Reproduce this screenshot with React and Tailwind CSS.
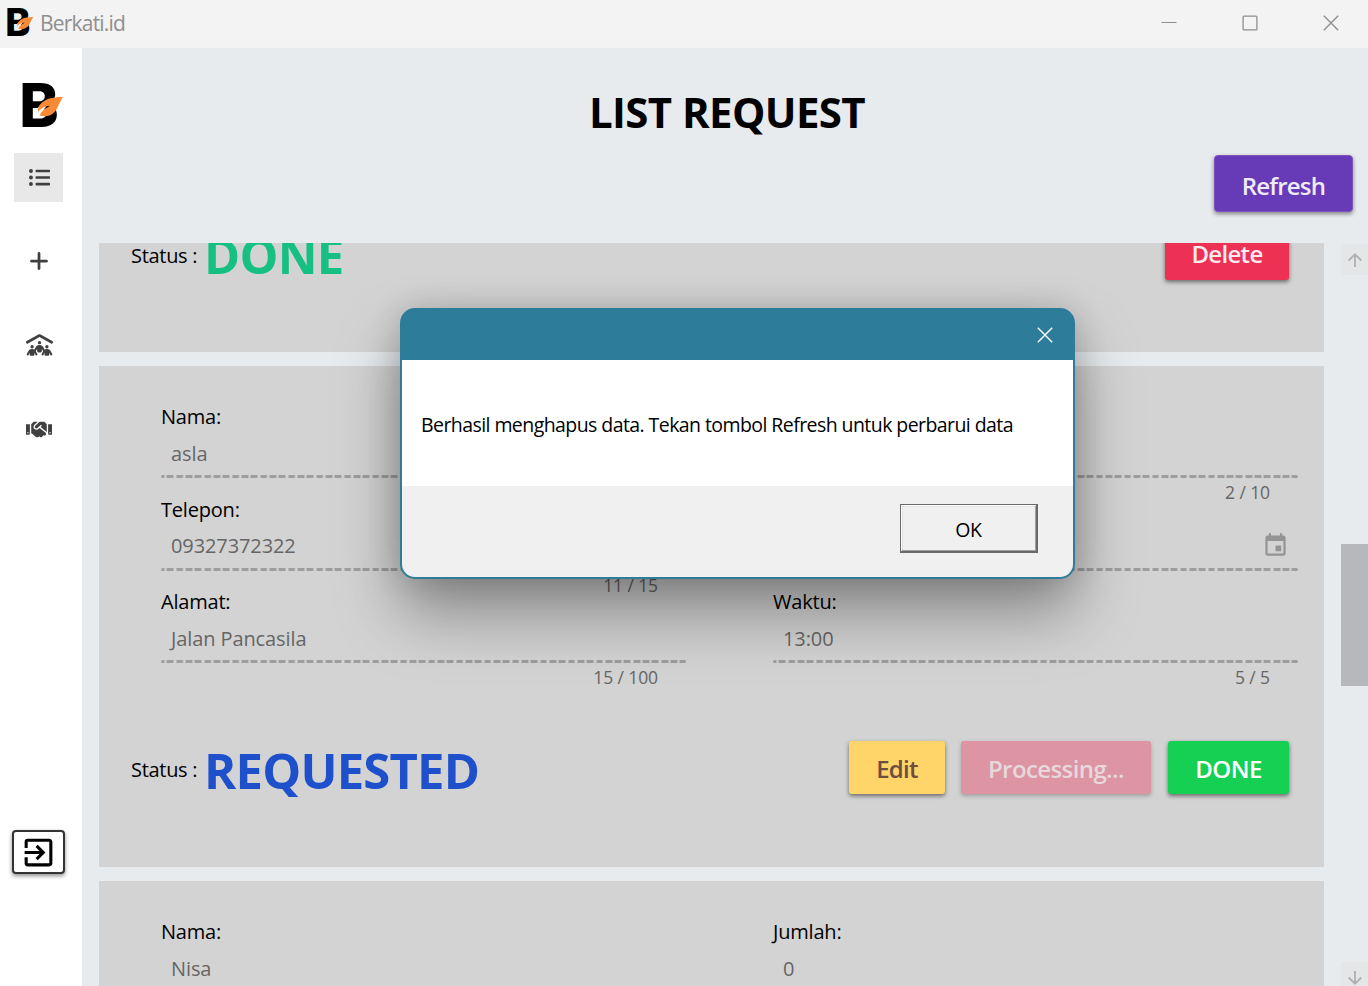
import React from "react";
import { FaListUl, FaHandshake } from "react-icons/fa";
import { FaPeopleRoof, FaPlus } from "react-icons/fa6";
import { MdExitToApp, MdEvent } from "react-icons/md";

function Logo({ className }) {
  return (
    <svg viewBox="0 0 42 44" className={className} overflow="visible" aria-label="Berkati">
      <text
        x="-2.800"
        y="44"
        fontFamily="Inter, sans-serif"
        fontWeight="800"
        fontSize="60.5"
        textLength="39.500"
        lengthAdjust="spacingAndGlyphs"
      >
        B
      </text>
      <path d="M15.500 25 L21 19.500 L24 24 L17 31.500 Z" fill="#fff" />
      <path
        d="M41 14 C32 14 24 15.500 19.500 20 C16.300 23 15.300 26.500 16.200 29.200 C17.500 26.500 21 23.500 28 22.800 C24 25.500 19.500 27 17.800 32.500 C22.500 34 28 33.500 32 29.500 C36 25.500 37 19.500 41 14 Z"
        fill="#fb8a36"
      />
    </svg>
  );
}

function Cross({ className }) {
  return (
    <svg viewBox="0 0 16 16" className={className} fill="none" stroke="currentColor" strokeWidth="1.4">
      <path d="M0.800 0.800 L15.200 15.200 M15.200 0.800 L0.800 15.200" />
    </svg>
  );
}

function TitleBar() {
  return (
    <header className="flex h-12 shrink-0 items-center bg-[#f3f3f3] pl-[7px] pr-[29px] text-[#8f8f8f]">
      <Logo className="mb-[4px] h-7 w-[27px]" />
      <span className="ml-[6px] flex-1 text-[21px] tracking-[-0.800px]">Berkati.id</span>
      <div className="flex items-center gap-[65px] pb-[3px]">
        <svg viewBox="0 0 16 16" className="size-4" stroke="currentColor" strokeWidth="1">
          <path d="M0.500 7.500 H15.500" />
        </svg>
        <svg viewBox="0 0 16 16" className="size-4" fill="none" stroke="currentColor" strokeWidth="1.3">
          <rect x="1.100" y="1.100" width="13.800" height="13.800" rx="1" />
        </svg>
        <Cross className="size-4" />
      </div>
    </header>
  );
}

function Sidebar() {
  return (
    <aside className="flex w-[82px] shrink-0 flex-col bg-white pt-[35px] text-[#404040]">
      <Logo className="ml-[22px] h-[44px] w-[42px]" />
      <nav className="mt-[26px] ml-[14px] flex flex-col gap-[35px]">
        <a className="flex size-[49px] items-center justify-center bg-[#e8e8e8] pb-[1px]">
          <FaListUl className="ml-[1px] size-[21px]" />
        </a>
        <a className="flex size-[49px] items-center justify-center pb-[1px]">
          <FaPlus className="size-[22px]" />
        </a>
        <a className="flex size-[49px] items-center justify-center pb-[1px]">
          <FaPeopleRoof className="ml-[2px] h-[22px] w-[27px]" />
        </a>
        <a className="flex size-[49px] items-center justify-center pb-[1px]">
          <FaHandshake className="ml-[1px] h-[21px] w-[26px]" />
        </a>
      </nav>
      <button className="mt-[376px] ml-[12px] flex h-[44px] w-[53px] items-center justify-center rounded-[4px] border-2 border-[#333] bg-white text-black shadow-[0_2px_4px_rgba(0,0,0,0.45)]">
        <MdExitToApp className="size-[37px]" />
      </button>
    </aside>
  );
}

function Button({ className, children }) {
  return (
    <button
      className={
        "flex h-[53px] items-center justify-center rounded-[3px] pt-[2px] text-[24px] font-semibold " + className
      }
    >
      {children}
    </button>
  );
}

function Field({ label, value, count, icon }) {
  return (
    <div className="flex h-[92.500px] flex-col">
      <div className="h-[30px] text-[20px] leading-[30px] tracking-[-0.200px] text-black">{label}</div>
      <div className="mt-[2px] flex h-[38px] items-center justify-between pr-[9px] pl-[10px] text-[20px] leading-[39px] tracking-[-0.100px] text-[#666]">
        <span>{value}</span>
        {icon}
      </div>
      <div className="mt-[3px] h-[3px] rounded-sm bg-[repeating-linear-gradient(90deg,#9e9e9e_0_6.700px,transparent_7px_9.330px)] bg-[position:-3.500px_0]" />
      <div className="h-[16px] pr-[28px] text-right text-[17.500px] leading-[29px] tracking-[-0.100px] text-[#666]">
        {count}
      </div>
    </div>
  );
}

function StatusRow({ status, color, children }) {
  return (
    <div className="flex h-[54px] items-center pr-[35px] pl-[32px]">
      <span className="w-[73px] pt-[5px] text-[20px] tracking-[-0.300px] text-black">Status :</span>
      <span className={"flex-1 pt-[4px] text-[49px] leading-[54px] font-bold tracking-[-0.800px] " + color}>
        {status}
      </span>
      {children}
    </div>
  );
}

function ScrollBar() {
  return (
    <div className="flex w-[27px] shrink-0 flex-col text-[#b0b0b0]">
      <div className="mt-[1px] flex h-[31px] items-center justify-center bg-[#e5e6e7]">
        <svg viewBox="0 0 14 14" className="size-[14px]" fill="none" stroke="currentColor" strokeWidth="1.8">
          <path d="M7 14 V1.500 M0.700 7.500 L7 1.300 L13.300 7.500" />
        </svg>
      </div>
      <div className="mt-[269px] h-[142px] bg-[#b6b8bc]" />
      <div className="mt-[276px] flex h-[24px] items-end justify-center bg-[#e5e6e7] pb-[1px]">
        <svg viewBox="0 0 14 14" className="size-[14px]" fill="none" stroke="currentColor" strokeWidth="1.8">
          <path d="M7 0 V12.500 M0.700 6.500 L7 12.700 L13.300 6.500" />
        </svg>
      </div>
    </div>
  );
}

function Dialog() {
  return (
    <div
      role="dialog"
      className="absolute top-[308px] left-[400px] flex h-[271px] w-[675px] flex-col rounded-[15px] border-2 border-[#2d7c99] bg-[#2d7c99] shadow-[0_34px_64px_rgba(0,0,0,0.360),0_0_32px_rgba(0,0,0,0.160)]"
    >
      <div className="flex h-[50px] shrink-0 items-center justify-end pr-[20px] pb-[1px] text-white">
        <Cross className="size-4" />
      </div>
      <p className="flex h-[126px] shrink-0 items-center bg-white pt-[4px] pl-[19px] text-[19.500px] whitespace-nowrap tracking-[-0.570px] text-black">
        Berhasil menghapus data. Tekan tombol Refresh untuk perbarui data
      </p>
      <div className="flex flex-1 items-start justify-end rounded-b-[13px] bg-[#f0f0f0] pt-[18px] pr-[35px]">
        <button className="h-[49px] w-[138px] border border-r-2 border-b-2 border-[#696969] pt-[3px] text-[19.500px] tracking-[-0.300px] text-black shadow-[inset_1px_1px_0_#fff,inset_-1px_-1px_0_#a0a0a0,inset_2px_2px_0_#e3e3e3]">
          OK
        </button>
      </div>
    </div>
  );
}

export default function App() {
  return (
    <div className="relative flex h-[986px] w-[1368px] flex-col overflow-hidden bg-[#e7ebee] font-['Open_Sans',sans-serif]">
      <TitleBar />
      <div className="flex min-h-0 flex-1">
        <Sidebar />
        <main className="flex min-w-0 flex-1 flex-col pl-[17px]">
          <h1 className="mt-[34px] h-[61px] pr-[13px] text-center text-[42px] leading-[60px] font-bold tracking-[-0.600px] text-black">
            LIST REQUEST
          </h1>
          <div className="mt-[12px] flex h-[88px] justify-end pr-[15px]">
            <button className="flex h-[57px] w-[139px] items-center justify-center rounded-[4px] border border-[#7e55c0] bg-[#673ab7] pt-[4px] text-[24px] font-semibold tracking-[-0.800px] text-[#f0ebf8] shadow-[0_2px_4px_rgba(0,0,0,0.450)]">
              Refresh
            </button>
          </div>
          <div className="flex min-h-0 flex-1 justify-between">
            <div className="flex w-[1225px] flex-col gap-[14px] overflow-hidden">
              <section className="flex h-[109px] shrink-0 flex-col bg-[#d3d3d3]">
                <div className="-mt-[17px]">
                  <StatusRow status="DONE" color="text-[#16c082]">
                    <Button className="w-[124px] bg-[#ed3155] tracking-[-0.700px] text-[#fdeaee] shadow-[0_2px_4px_rgba(0,0,0,0.500)]">
                      Delete
                    </Button>
                  </StatusRow>
                </div>
              </section>
              <section className="h-[501px] shrink-0 bg-[#d3d3d3]">
                <div className="grid grid-cols-2 gap-x-[87px] pt-[36px] pr-[26px] pl-[62px]">
                  <Field label="Nama:" value="asla" />
                  <Field count="2 / 10" />
                  <Field label="Telepon:" value="09327372322" count="11 / 15" />
                  <Field icon={<MdEvent className="size-[27px] text-[#949494]" />} />
                  <Field label="Alamat:" value="Jalan Pancasila" count="15 / 100" />
                  <Field label="Waktu:" value="13:00" count="5 / 5" />
                </div>
                <div className="mt-[61px]">
                  <StatusRow status="REQUESTED" color="text-[#1f50cb]">
                    <div className="flex">
                      <Button className="w-[96px] bg-[#ffd56a] tracking-[-0.700px] text-[#6d4c41] shadow-[0_2px_4px_rgba(0,0,0,0.500)]">
                        Edit
                      </Button>
                      <Button className="ml-[16px] w-[190px] bg-[#dd95a3] tracking-[-0.600px] text-[#e6d8db] shadow-[0_2px_4px_rgba(0,0,0,0.250)]">
                        Processing...
                      </Button>
                      <Button className="ml-[17px] w-[121px] bg-[#15d053] tracking-[-0.500px] text-white shadow-[0_2px_4px_rgba(0,0,0,0.500)]">
                        DONE
                      </Button>
                    </div>
                  </StatusRow>
                </div>
              </section>
              <section className="h-[501px] shrink-0 bg-[#d3d3d3]">
                <div className="grid grid-cols-2 gap-x-[87px] pt-[36px] pr-[26px] pl-[62px]">
                  <Field label="Nama:" value="Nisa" />
                  <Field label="Jumlah:" value="0" />
                </div>
              </section>
            </div>
            <ScrollBar />
          </div>
        </main>
      </div>
      <Dialog />
    </div>
  );
}
